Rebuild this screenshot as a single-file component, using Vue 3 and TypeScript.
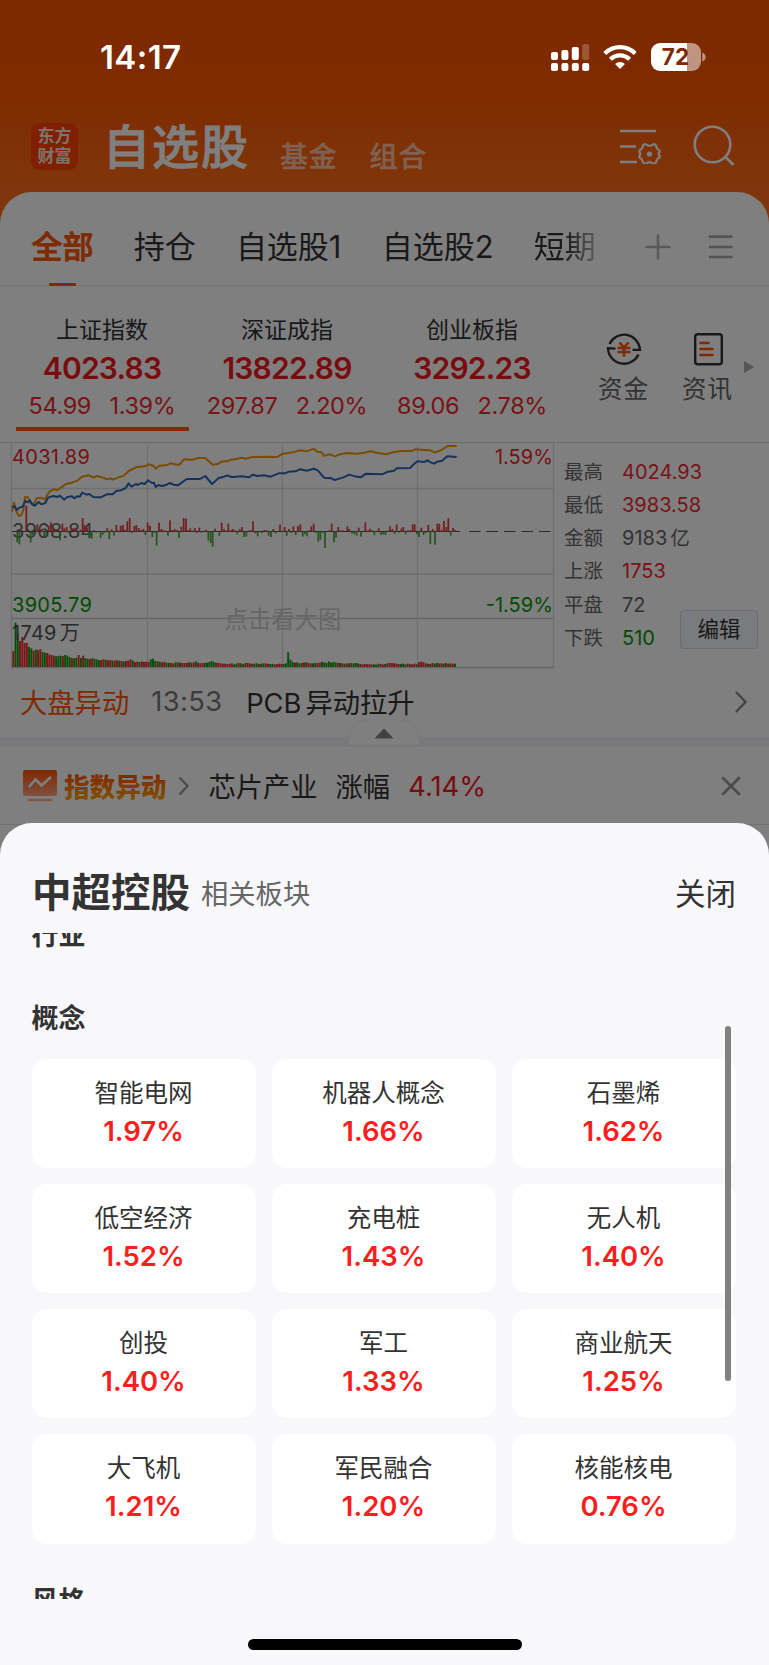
<script setup lang="ts">
interface IndexItem { name: string; value: string; diff: string; pct: string; active?: boolean }
interface Stat { label: string; value: string; unit?: string; tone: 'up' | 'down' | 'flat' }
interface Concept { name: string; pct: string }

const tabs: string[] = ['全部', '持仓', '自选股1', '自选股2', '短期']

const indices: IndexItem[] = [
  { name: '上证指数', value: '4023.83', diff: '54.99', pct: '1.39%', active: true },
  { name: '深证成指', value: '13822.89', diff: '297.87', pct: '2.20%' },
  { name: '创业板指', value: '3292.23', diff: '89.06', pct: '2.78%' },
]

const stats: Stat[] = [
  { label: '最高', value: '4024.93', tone: 'up' },
  { label: '最低', value: '3983.58', tone: 'up' },
  { label: '金额', value: '9183', unit: '亿', tone: 'flat' },
  { label: '上涨', value: '1753', tone: 'up' },
  { label: '平盘', value: '72', tone: 'flat' },
  { label: '下跌', value: '510', tone: 'down' },
]

const concepts: Concept[] = [
  { name: '智能电网', pct: '1.97%' },
  { name: '机器人概念', pct: '1.66%' },
  { name: '石墨烯', pct: '1.62%' },
  { name: '低空经济', pct: '1.52%' },
  { name: '充电桩', pct: '1.43%' },
  { name: '无人机', pct: '1.40%' },
  { name: '创投', pct: '1.40%' },
  { name: '军工', pct: '1.33%' },
  { name: '商业航天', pct: '1.25%' },
  { name: '大飞机', pct: '1.21%' },
  { name: '军民融合', pct: '1.20%' },
  { name: '核能核电', pct: '0.76%' },
]

// Chart geometry is kept in third-pixels; the plot group scales it down.
const leadLine =
  '36,230 42,203 50,232 57,243 64,240 70,225 75,186 83,186 92,203 101,208 110,190 124,188 134,193 148,170 160,163 173,165 182,158 198,147 216,143 232,137 246,125 266,121 280,127 292,123 312,129 322,133 332,130 338,134 356,127 372,122 386,108 408,97 434,94 446,88 460,92 467,101 478,92 502,90 510,85 537,90 552,73 576,74 596,69 616,69 638,89 656,86 664,80 684,78 692,74 704,73 725,68 736,71 758,66 800,65 832,66 846,57 878,52 898,46 920,49 942,41 952,50 964,52 972,62 990,58 1004,64 1020,58 1042,54 1070,56 1090,54 1110,49 1130,53 1158,58 1180,52 1204,48 1234,48 1246,43 1280,46 1292,46 1304,53 1324,45 1344,33 1370,33'
const indexLine =
  '36,217 44,214 50,225 58,218 68,215 76,198 84,202 90,196 96,208 104,212 116,201 124,208 136,204 144,188 160,183 172,186 180,182 192,194 202,186 216,184 224,190 230,184 240,185 246,173 260,179 268,177 280,186 302,187 320,178 338,178 350,167 360,167 376,160 386,145 394,155 408,147 414,150 424,144 434,147 444,136 456,144 462,143 467,156 476,150 486,153 500,149 510,144 520,149 534,151 560,132 600,132 616,123 636,147 656,129 672,125 682,121 694,126 700,126 724,124 748,127 758,119 772,123 792,121 812,125 836,115 856,115 866,110 886,109 900,103 920,107 942,101 954,107 972,128 994,130 1004,135 1020,130 1030,127 1048,119 1064,124 1082,127 1098,116 1118,117 1146,118 1164,110 1182,107 1190,100 1230,99 1242,87 1252,79 1272,81 1282,76 1292,82 1302,86 1312,80 1326,77 1342,64 1370,66'

const momentum: number[][] = [
  [52, -32], [58, -38], [66, 4], [79, 78], [92, -33], [98, -10], [112, 22], [118, 8], [125, 5], [133, -15], [139, -10], [146, 18], [153, 28], [160, 10], [167, 5], [173, 4], [180, -26], [187, 24], [193, 10], [200, 14], [207, -5], [214, 8], [221, 10], [227, 12], [234, -8], [241, 6], [248, 41], [254, 20], [261, 12], [268, -12], [275, -21], [281, 5], [288, -3], [302, -19], [308, -10], [315, -3], [322, 10], [328, -23], [335, 7], [342, -12], [349, 20], [355, 4], [362, 18], [369, 20], [376, 6], [382, 31], [389, 41], [396, -4], [403, 17], [409, 20], [416, 11], [423, 5], [430, 8], [436, -10], [443, 27], [450, 18], [457, -16], [463, -3], [470, -42], [477, 27], [484, 8], [490, 4], [497, 3], [504, -12], [510, 34], [517, 5], [524, 8], [531, 5], [537, -19], [544, 15], [551, 41], [558, 39], [564, 5], [571, 10], [578, 3], [585, 10], [591, -4], [598, 12], [605, -3], [618, 6], [625, -27], [632, -34], [638, -45], [645, 9], [658, -12], [665, 27], [672, 8], [679, 3], [685, 24], [692, 4], [698, 8], [705, 4], [712, -8], [719, 8], [726, 14], [732, -16], [739, -15], [746, 3], [752, 4], [759, 31], [766, -5], [773, -14], [786, -4], [793, 5], [800, 4], [806, -12], [813, -16], [820, 8], [827, -5], [840, 21], [854, 14], [860, -12], [867, 8], [874, -4], [880, 16], [887, -10], [894, 17], [901, 22], [908, -15], [914, -8], [921, -14], [928, 4], [934, 16], [941, 24], [948, -4], [955, -30], [961, -24], [968, -4], [975, -49], [988, 4], [995, 24], [1002, -32], [1008, -18], [1015, 14], [1022, 3], [1028, 4], [1042, 16], [1048, 8], [1056, -5], [1063, -8], [1070, -12], [1076, 12], [1083, -15], [1096, 28], [1103, 4], [1110, 9], [1116, 4], [1123, -11], [1136, 10], [1143, -10], [1150, -8], [1156, -10], [1163, 3], [1170, 16], [1177, 8], [1184, -6], [1190, 22], [1197, -3], [1204, 9], [1210, 14], [1217, -8], [1224, 4], [1231, 4], [1238, 22], [1244, 22], [1251, -8], [1257, -16], [1264, 12], [1271, -10], [1278, -4], [1285, 20], [1291, -37], [1298, 8], [1305, -39], [1312, 24], [1318, 24], [1325, 6], [1332, 32], [1339, 14], [1345, 40], [1352, -12], [1359, 11], [1366, 5],
]

const volumes: number[] = [
  48, 133, 100, 78, 90, 72, 72, 60, 56, 49, 52, 51, 53, 45, 43, 42, 38, 36, 34, 32, 33, 34, 33, 36, 34, 30, 27, 26, 28, 36, 27, 34, 27, 25, 24, 26, 25, 23, 21, 21, 23, 22, 20, 21, 19, 20, 20, 19, 18, 17, 18, 19, 23, 20, 15, 16, 15, 17, 15, 16, 15, 23, 25, 18, 17, 16, 14, 16, 13, 13, 12, 11, 14, 14, 13, 12, 12, 12, 14, 13, 14, 17, 13, 11, 12, 12, 13, 15, 18, 15, 13, 12, 11, 10, 10, 9, 10, 11, 8, 10,
  12, 11, 9, 12, 12, 11, 10, 10, 11, 9, 10, 11, 11, 10, 9, 9, 8, 9, 10, 9, 9, 11, 44, 22, 15, 13, 14, 11, 12, 13, 14, 12, 11, 11, 12, 12, 13, 15, 14, 12, 17, 13, 15, 14, 12, 12, 11, 10, 11, 11, 12, 11, 12, 11, 9, 8, 9, 8, 8, 8, 8, 7, 10, 9, 8, 9, 11, 12, 12, 11, 10, 9, 9, 10, 8, 10, 9, 8, 10, 8, 14, 16, 14, 11, 10, 9, 12, 10, 12, 11, 11, 10, 12, 10, 11, 10, 10, 11,
]
// One character per volume bar: r = rise, g = fall.
const volumeTones =
  'rggrrrrggrgrrggrrrrgggrgggrggrgrggrrgggrrgrrgrrgrgrrrgrrgrrrrgggrgrrggrrgrgrrrgrrgrrrgggggrrrrrrrrgg' +
  'rgrgrrrggrggrrggrrrrgggggrggrrgrrggrrgggggggrgrgrgrgggrrrrrrgggrrgrrrrrrggrgrrrgrrrrgrrggrrgrgrrggrgrr'

const volumeBars = volumes.map((h, i) => ({ x: 37 + i * 6.76, h, rise: volumeTones[i] === 'r' })).filter((b) => b.x < 1366)
</script>

<template>
  <div class="screen">
    <div class="app" aria-hidden="true">
      <header class="topbar">
        <div class="logo"><span>东方</span><span>财富</span></div>
        <div class="heading">自选股</div>
        <div class="sub first">基金</div>
        <div class="sub">组合</div>
        <svg class="ico-filter" width="44" height="40" viewBox="0 0 44 40" fill="none" stroke="#fff" stroke-width="2.6">
          <path d="M1 7h36M1 22.500h16M1 38h17" />
          <g transform="translate(30.500 30)">
            <path d="M0-8.200Q2-8.200 3.500-9.700L5.200-9.700Q6.800-8.800 7-6.700 7.500-4.600 9.800-3.800L10.200-2.300Q8.400 0 10.200 2.300L9.800 3.800Q7.500 4.600 7 6.700 6.800 8.800 5.200 9.700L3.500 9.700Q2 8.200 0 8.200-2 8.200-3.500 9.700L-5.200 9.700Q-6.800 8.800-7 6.700-7.500 4.600-9.800 3.800L-10.200 2.300Q-8.400 0-10.200-2.300L-9.800-3.800Q-7.500-4.600-7-6.700-6.800-8.800-5.200-9.700L-3.500-9.700Q-2-8.200 0-8.200z" stroke-width="2.200" stroke-linejoin="round" />
            <circle r="2.600" fill="#fff" stroke="none" />
          </g>
        </svg>
        <svg class="ico-search" width="44" height="44" viewBox="0 0 44 44" fill="none" stroke="#fff" stroke-width="2.600">
          <circle cx="20.500" cy="20.500" r="17.800" /><path d="m32.500 32 9 9" />
        </svg>
      </header>

      <main class="panel">
        <nav class="tabs">
          <div v-for="(t, i) in tabs" :key="t" class="tab" :class="{ on: i === 0, fade: i === 4 }">{{ t }}</div>
          <svg class="tab-add" width="26" height="26" viewBox="0 0 26 26" stroke="#b3b3b3" stroke-width="2.600" stroke-linecap="round"><path d="M13 1.500v23M1.500 13h23" /></svg>
          <svg class="tab-list" width="26" height="26" viewBox="0 0 26 26" stroke="#a6a6a6" stroke-width="2.700" stroke-linecap="round"><path d="M2 2.700h21.500M2 13h21.500M2 23h21.500" /></svg>
        </nav>

        <section class="indices">
          <div v-for="ix in indices" :key="ix.name" class="index" :class="{ on: ix.active }">
            <div class="ix-name">{{ ix.name }}</div>
            <div class="ix-value">{{ ix.value }}</div>
            <div class="ix-sub"><span>{{ ix.diff }}</span><span>{{ ix.pct }}</span></div>
          </div>
          <div class="quick fund">
            <svg width="38" height="38" viewBox="0 0 38 38" fill="none" stroke="#333" stroke-width="2.300">
              <path d="M4.500 14a16 16 0 0 1 30.500 5.800h-7.500M33.500 24.500A16 16 0 0 1 3 18.200l7.500.4" />
              <path d="m14.500 12.500 4.500 5 4.500-5M12.500 18h13M12.500 22h13M19 17.500v9" stroke="#f50" stroke-width="2.600" />
            </svg>
            <span>资金</span>
          </div>
          <div class="quick news">
            <svg width="38" height="38" viewBox="0 0 38 38" fill="none" stroke="#333" stroke-width="2.400">
              <rect x="6.200" y="4.200" width="26.600" height="30" rx="2.500" />
              <path d="M11.500 13h8M11.500 19h12M11.500 25h12" stroke="#f50" stroke-width="2.600" stroke-linecap="round" />
            </svg>
            <span>资讯</span>
          </div>
          <svg class="more" width="10" height="12" viewBox="0 0 10 12"><path d="M0 0l10 6-10 6z" fill="#aaa" /></svg>
        </section>

        <section class="market">
          <svg class="chart" width="556" height="226" viewBox="0 0 556 226">
            <g fill="none" stroke="#dcdce4" stroke-width="1.300">
              <path d="M11.500 0V225M553.500 0V225M11 45.500H553M11 131H553M147.500 3V174M282.500 3V174M417.500 3V174M147.500 178V224M282.500 178V224M417.500 178V224" />
              <path d="M11 175.500H553M11 224.500H554" stroke="#cdcdd2" />
            </g>
            <text class="mark" x="224.500" y="184.500">点击看大图</text>
            <text class="lab" x="12" y="94.500" fill="#666">3968.84</text>
            <path d="M12 88.500H460" stroke="#555" stroke-width="1" />
            <path d="M469 88.500H554" stroke="#555" stroke-width="1.200" stroke-dasharray="11.500 6" />
            <g transform="translate(0 -8) scale(.33333)">
              <rect v-for="(b, i) in momentum" :key="'m' + i" :x="b[0] - 2.600" :y="b[1] > 0 ? 290 - b[1] : 290" width="5.200" :height="Math.abs(b[1])" :fill="b[1] > 0 ? '#e8383c' : '#4fa93a'" />
              <rect v-for="(b, i) in volumeBars" :key="'v' + i" :x="b.x" :y="696 - b.h" width="5.800" :height="b.h" :fill="b.rise ? '#ef2b2f' : '#0c9d10'" />
              <polyline :points="leadLine" fill="none" stroke="#f59600" stroke-width="6" stroke-linejoin="round" />
              <polyline :points="indexLine" fill="none" stroke="#2b67b5" stroke-width="6" stroke-linejoin="round" />
            </g>
            <text class="lab" x="12" y="20.500" fill="#f02228">4031.89</text>
            <text class="lab end" x="552.800" y="20.500" fill="#f02228">1.59%</text>
            <text class="lab" x="12" y="169" fill="#009900">3905.79</text>
            <text class="lab end" x="552.800" y="169" fill="#009900">-1.59%</text>
            <text class="lab" x="12" y="197" fill="#555">1749<tspan dx="3">万</tspan></text>
          </svg>
          <div class="stats">
            <div v-for="s in stats" :key="s.label" class="stat">
              <span class="st-label">{{ s.label }}</span>
              <span class="st-value" :class="s.tone">{{ s.value }}<span v-if="s.unit" class="unit">{{ s.unit }}</span></span>
            </div>
          </div>
          <div class="edit">编辑</div>
        </section>

        <section class="alert">
          <span class="al-type">大盘异动</span>
          <span class="al-time">13:53</span>
          <span class="al-text">PCB<i></i>异动拉升</span>
          <svg class="al-go" width="14" height="24" viewBox="0 0 14 24" fill="none" stroke="#888" stroke-width="2.400"><path d="m2 2 9.500 10L2 22" /></svg>
        </section>

        <div class="band">
          <svg class="fold" width="76" height="27" viewBox="0 0 76 27">
            <path d="M1 26 5 10Q8 1 18 1h40q10 0 13 9l4 16z" fill="#fff" stroke="#f1f1f3" />
            <path d="M28.500 19.500 38 9.500l9.500 10z" fill="#858585" />
          </svg>
        </div>

        <section class="sector">
          <svg width="36" height="34" viewBox="0 0 36 34" fill="none">
            <defs><linearGradient id="badge" x1="0" y1="0" x2="0" y2="1"><stop stop-color="#ff5200" /><stop offset="1" stop-color="#ffa183" /></linearGradient></defs>
            <rect x="1" y="1" width="34" height="26" rx="2.500" fill="url(#badge)" />
            <path d="m7 18 6.500-7.500 6 6L29 8" stroke="#fff" stroke-width="2.600" />
            <path d="M6.500 31h23" stroke="#ffb499" stroke-width="2.400" stroke-linecap="round" />
          </svg>
          <span class="se-name">指数异动</span>
          <svg class="se-arrow" width="12" height="20" viewBox="0 0 12 20" fill="none" stroke="#999" stroke-width="2.400"><path d="m1.500 1.500 8 8.500-8 8.500" /></svg>
          <span class="se-a">芯片产业</span>
          <span class="se-b">涨幅</span>
          <span class="se-pct">4.14%</span>
          <svg class="se-close" width="22" height="22" viewBox="0 0 22 22" stroke="#999" stroke-width="2.800" stroke-linecap="round"><path d="m3 3 16 16M19 3 3 19" /></svg>
        </section>
      </main>
    </div>

    <div class="dim"></div>

    <div class="status">
      <span class="time">14:17</span>
      <svg class="signal" width="40" height="30" viewBox="0 0 40 30" fill="#fff">
        <rect x="1" y="10" width="7" height="8" rx="2" /><rect x="11.400" y="8" width="7" height="10" rx="2" /><rect x="21.800" y="5" width="7" height="13" rx="2" /><rect x="32.200" y="2" width="7" height="16" rx="2" opacity=".22" />
        <rect x="1" y="21" width="7" height="8" rx="2" /><rect x="11.400" y="21" width="7" height="8" rx="2" /><rect x="21.800" y="21" width="7" height="8" rx="2" /><rect x="32.200" y="21" width="7" height="8" rx="2" />
      </svg>
      <svg class="wifi" width="34" height="26" viewBox="0 0 34 26" fill="none" stroke="#fff" stroke-width="4.200">
        <path d="M1.800 9.500a21.500 21.500 0 0 1 30.400 0" /><path d="M7.400 15.300a13.600 13.600 0 0 1 19.200 0" /><path d="M17 25l-4.900-5a7 7 0 0 1 9.800 0z" fill="#fff" stroke="none" />
      </svg>
      <div class="battery"><span>72</span></div>
      <svg class="nub" width="4" height="10" viewBox="0 0 4 10"><path d="M.3.500Q3.600 2 3.600 5T.3 9.500z" fill="#fff" opacity=".5" /></svg>
    </div>

    <div class="sheet">
      <div class="sheet-head">
        <span class="title">中超控股</span>
        <span class="subtitle">相关板块</span>
        <span class="close">关闭</span>
      </div>
      <div class="scroller">
        <div class="scroll-body">
          <h3 class="group industry">行业</h3>
          <h3 class="group">概念</h3>
          <div class="grid">
            <div v-for="c in concepts" :key="c.name" class="card">
              <span class="c-name">{{ c.name }}</span>
              <span class="c-pct">{{ c.pct }}</span>
            </div>
          </div>
          <h3 class="group style">风格</h3>
        </div>
        <div class="thumb"></div>
      </div>
      <div class="home"></div>
    </div>
  </div>
</template>

<style>
body { margin: 0; }
</style>

<style scoped>
* { box-sizing: border-box; }
.screen { position: relative; width: 769px; height: 1665px; overflow: hidden; font-family: Inter, "Noto Sans CJK SC", sans-serif; white-space: nowrap; color: #333; }
.app { width: 769px; height: 900px; background: linear-gradient(#ff5200 0, #ff5400 80px, #ff6c18 192px, #ff6c18 240px); }
.dim { position: absolute; inset: 0; background: rgba(0, 0, 0, .5); }

.topbar { height: 192px; padding: 108px 0 0 31px; display: flex; align-items: flex-start; color: #fff; }
.logo { width: 47px; height: 47px; margin-top: 15px; border-radius: 9px; background: #ff4000; display: flex; flex-direction: column; align-items: center; padding-top: 4px; font-size: 17px; font-weight: 700; line-height: 19.500px; color: #ffe4da; }
.heading { margin-left: 25px; font-size: 47px; letter-spacing: 2px; line-height: 77px; font-weight: 500; width: 150px; -webkit-text-stroke: .9px #fff; }
.sub { font-size: 28px; letter-spacing: .8px; line-height: 40px; margin: 29px 0 0 32px; font-weight: 500; color: rgba(255, 255, 255, .62); -webkit-text-stroke: .4px rgba(255, 255, 255, .4); }
.sub.first { margin-left: 27px; }
.ico-filter { margin: 16px 0 0 192px; }
.ico-search { margin: 16px 0 0 29px; }

.panel { height: 708px; background: #fff; border-radius: 32px 32px 0 0; }
.tabs { height: 94px; border-bottom: 1px solid #eaeaea; display: flex; padding: 16px 0 0 31.500px; }
.tab { position: relative; font-size: 31px; line-height: 78px; margin-right: 40.200px; height: 78px; }
.tab.on { color: #ff5500; font-weight: 500; -webkit-text-stroke: .8px #ff5500; }
.tab.on::after { content: ""; position: absolute; left: 17.500px; bottom: 0; width: 27px; height: 3.500px; border-radius: 1px; background: #ff5500; }
.tab.fade { background: linear-gradient(90deg, #333 48%, #bbb 100%); background-clip: text; -webkit-background-clip: text; color: transparent; margin-right: 0; }
.tab-add { position: absolute; left: 645px; top: 234px; }
.tab-list { position: absolute; left: 708px; top: 234px; }

.indices { position: relative; height: 157px; display: flex; padding-left: 9.500px; border-bottom: 1.500px solid #d6d6d9; }
.index { width: 185px; display: flex; flex-direction: column; align-items: center; position: relative; }
.index.on::after { content: ""; position: absolute; left: 6.500px; bottom: 11.500px; width: 173px; height: 4px; background: #ff5a08; }
.ix-name { margin-top: 29px; height: 31px; font-size: 23px; line-height: 31px; }
.ix-value { margin-top: 4px; height: 37px; font-size: 30px; line-height: 36px; font-weight: 600; color: #f0181e; letter-spacing: -.8px; }
.ix-sub { display: flex; gap: 18.500px; margin-top: 4px; font-size: 23.500px; line-height: 30px; letter-spacing: -.4px; color: #f0282e; }
.quick { display: flex; flex-direction: column; align-items: center; width: 60px; padding-top: 44px; font-size: 24.500px; line-height: 34px; letter-spacing: 1px; color: #666; }
.quick span { margin-top: 4px; }
.quick.fund { margin-left: 29px; }
.quick.news { margin-left: 24px; }
.more { margin: 75px 0 0 6px; }

.market { position: relative; display: flex; height: 229px; }
.lab { font-size: 20px; letter-spacing: .3px; }
.lab.end { text-anchor: end; letter-spacing: 0; }
.mark { font-size: 23.400px; fill: #ccc; }
.stats { margin: 12.500px 0 0 8px; }
.stat { display: flex; height: 33.250px; line-height: 33.250px; font-size: 20px; }
.st-label { width: 58px; color: #666; font-size: 19.500px; }
.unit { margin-left: 3px; font-size: 19.500px; }
.up { color: #f0282e; } .down { color: #009900; } .flat { color: #666; }
.edit { position: absolute; left: 680px; top: 167px; width: 78px; height: 39px; border: 1.500px solid #d5d8e0; border-radius: 4px; background: #f5f6fa; font-size: 21.500px; line-height: 36px; text-align: center; }

.alert { height: 65px; display: flex; align-items: center; padding: 0 21px 6px 20px; font-size: 27.300px; }
.al-type { color: #ff5500; margin-top: -1px; }
.al-time { color: #777; margin-left: 22px; width: 73px; letter-spacing: .4px; }
.al-text { margin-left: 22px; margin-top: -1px; }
.al-text i { display: inline-block; width: 4px; }
.al-go { margin-left: auto; }
.band { height: 10px; background: #f3f3f7; position: relative; }
.fold { position: absolute; left: 346px; top: -18px; }
.sector { height: 78px; display: flex; align-items: center; padding-left: 22px; font-size: 27.300px; border-bottom: 1.500px solid #e5e5e5; }
.se-name { margin-left: 6px; font-size: 25.600px; font-weight: 900; background: linear-gradient(#ff5a00 25%, #ff9900 80%); background-clip: text; -webkit-background-clip: text; color: transparent; }
.se-arrow { margin-left: 12px; }
.se-a { margin: -2px 0 0 18px; }
.se-b { margin: -2px 0 0 18px; }
.se-pct { margin: 1px 0 0 18px; color: #f0181e; }
.se-close { margin-left: auto; margin-right: 27px; }

.status { position: absolute; left: 0; top: 0; height: 114px; width: 769px; display: flex; align-items: center; color: #fff; }
.time { margin-left: 100px; font-size: 33px; font-weight: 600; width: 84px; letter-spacing: .4px; }
.signal { margin-left: 366px; }
.wifi { margin-left: 13px; }
.battery { margin-left: 13.500px; width: 50px; height: 28px; border-radius: 9px; background: linear-gradient(90deg, #fff 36px, rgba(255, 255, 255, .5) 36px); color: #7f2900; font-weight: 700; font-size: 22.500px; line-height: 28px; text-align: center; }
.nub { margin-left: 1px; }

.sheet { position: absolute; left: 0; top: 823px; width: 769px; height: 842px; border-radius: 32px 32px 0 0; background: #f8f8fb; }
.sheet-head { height: 110px; display: flex; padding: 40px 33px 0 32px; line-height: 62px; }
.title { font-size: 39.500px; font-weight: 700; line-height: 61px; }
.subtitle { font-size: 27.300px; color: #666; margin-left: 11px; line-height: 64px; }
.close { font-size: 30.500px; margin-left: auto; line-height: 62px; }
.scroller { position: relative; height: 665.500px; overflow: hidden; }
.group { margin: 0; font-size: 27px; line-height: 40px; font-weight: 700; padding-left: 31.500px; }
.industry { margin-top: -17px; margin-bottom: 43px; }
.grid { display: grid; grid-template-columns: repeat(3, 224px); grid-auto-rows: 109.300px; gap: 16px; padding: 19.500px 32px 0; }
.card { background: #fff; border-radius: 15px; display: flex; flex-direction: column; align-items: center; padding: 16px 1px 0 0; }
.c-name { font-size: 24.500px; line-height: 36px; }
.c-pct { font-size: 27.500px; line-height: 36px; margin-top: 2px; font-weight: 600; color: #fa1e1e; }
.group.style { margin-top: 38.500px; }
.thumb { position: absolute; left: 725px; top: 93px; width: 6px; height: 355px; border-radius: 3px; background: #808080; }
.home { margin: 40.500px 0 0 247.500px; width: 274px; height: 10.500px; border-radius: 6px; background: #000; }
</style>
